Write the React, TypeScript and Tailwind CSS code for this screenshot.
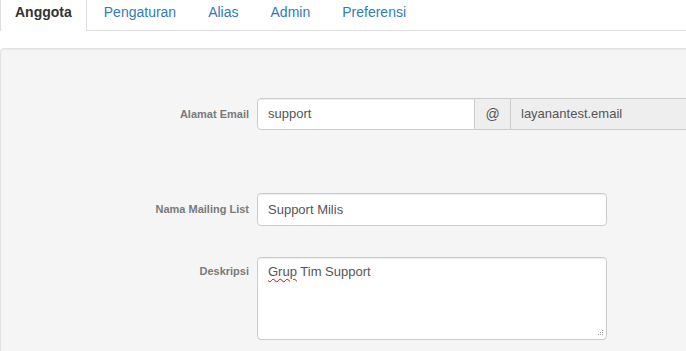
const tabs = ['Anggota', 'Pengaturan', 'Alias', 'Admin', 'Preferensi'];

function Label({ children }: { children: string }) {
  return (
    <label className="block w-[248px] shrink-0 text-right text-[11px] font-bold text-[#7a7a7a]">
      {children}
    </label>
  );
}

export default function App() {
  return (
    <div
      className="h-[351px] w-[686px] overflow-hidden bg-white text-[14px] text-[#555]"
      style={{ fontFamily: '"Liberation Sans", Arial, sans-serif' }}
    >
      {/* tabs */}
      <div className="flex h-[31px] border-b border-[#ddd]">
        {tabs.map((t, i) =>
          i === 0 ? (
            <div
              key={t}
              className="-mb-px mr-[2px] h-[31px] border-r border-l border-[#ddd] bg-white px-[14px] pt-[2px] leading-5 font-bold text-[#333]"
            >
              {t}
            </div>
          ) : (
            <div key={t} className="mr-[2px] px-[15px] pt-[2px] leading-5 text-[#337ab7]">
              {t}
            </div>
          ),
        )}
      </div>

      {/* panel */}
      <div className="mt-[17px] w-[720px] rounded-[4px] border border-[#e3e3e3] bg-[#f5f5f5] pt-[49px] pb-8 text-[13px] shadow-[inset_0_1px_1px_rgba(0,0,0,0.05)]">
        <div className="flex items-center gap-2">
          <Label>Alamat Email</Label>
          <div className="flex h-[32px] flex-1">
            <div className="flex w-[218px] items-center rounded-l-[4px] border border-[#ccc] bg-white pl-[10px] shadow-[inset_0_1px_1px_rgba(0,0,0,0.075)]">
              support
            </div>
            <div className="flex w-[35px] items-center justify-center border-y border-[#ccc] bg-[#eee] text-[14px]">
              @
            </div>
            <div className="flex flex-1 items-center border border-[#ccc] bg-[#eee] pl-[10px]">
              layanantest.email
            </div>
          </div>
        </div>

        <div className="mt-[63px] flex items-center gap-2">
          <Label>Nama Mailing List</Label>
          <div className="flex h-[33px] w-[350px] items-center rounded-[4px] border border-[#ccc] bg-white pl-[10px] shadow-[inset_0_1px_1px_rgba(0,0,0,0.075)]">
            Support Milis
          </div>
        </div>

        <div className="mt-[31px] flex items-start gap-2">
          <div className="w-[248px] shrink-0 pt-[6px]">
            <Label>Deskripsi</Label>
          </div>
          <div className="relative h-[83px] w-[350px] rounded-[4px] border border-[#ccc] bg-white pt-[4px] pl-[10px] shadow-[inset_0_1px_1px_rgba(0,0,0,0.075)]">
            <span className="underline decoration-[#d00] decoration-wavy decoration-1 underline-offset-2">Grup</span> Tim
            Support
            <svg className="absolute right-[2px] bottom-[2px]" width="8" height="8" viewBox="0 0 8 8">
              <g fill="#999">
                <rect x="6" y="1" width="1" height="1" />
                <rect x="4" y="3" width="1" height="1" />
                <rect x="6" y="3" width="1" height="1" />
                <rect x="2" y="5" width="1" height="1" />
                <rect x="4" y="5" width="1" height="1" />
                <rect x="6" y="5" width="1" height="1" />
              </g>
            </svg>
          </div>
        </div>
      </div>
    </div>
  );
}
